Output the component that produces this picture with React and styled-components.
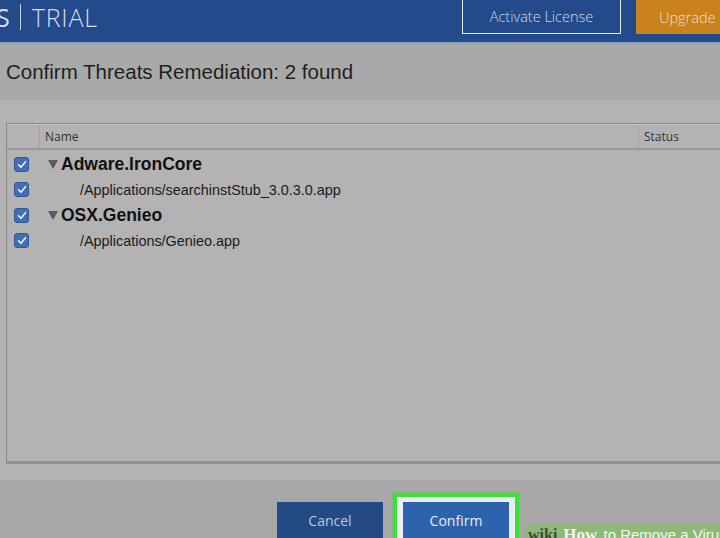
import React from "react";
import styled, { createGlobalStyle } from "styled-components";

const GlobalStyle = createGlobalStyle`
  html, body {
    margin: 0;
    padding: 0;
    background: #b3b3b3;
    font-family: "Liberation Sans", Arial, sans-serif;
    overflow: hidden;
  }
`;

const threats = [
  {
    name: "Adware.IronCore",
    files: ["/Applications/searchinstStub_3.0.3.0.app"],
  },
  {
    name: "OSX.Genieo",
    files: ["/Applications/Genieo.app"],
  },
];

export default function App() {
  return (
    <Page>
      <GlobalStyle />
      <TopBar>
        <Brand>
          <span className="logo">S</span>
          <span className="sep" />
          <span className="trial">TRIAL</span>
        </Brand>
        <TopActions>
          <OutlineButton>Activate License</OutlineButton>
          <UpgradeButton>Upgrade</UpgradeButton>
        </TopActions>
      </TopBar>
      <TitleBand>
        <h1>Confirm Threats Remediation: 2 found</h1>
      </TitleBand>
      <Body>
        <Table>
          <HeadRow>
            <div className="check" />
            <div className="name">Name</div>
            <div className="status">Status</div>
          </HeadRow>
          {threats.map((t) => (
            <React.Fragment key={t.name}>
              <Row $tall>
                <CheckBox />
                <Threat>
                  <Caret />
                  {t.name}
                </Threat>
              </Row>
              {t.files.map((f) => (
                <Row key={f}>
                  <CheckBox />
                  <FilePath>{f}</FilePath>
                </Row>
              ))}
            </React.Fragment>
          ))}
        </Table>
      </Body>
      <Footer>
        <ActionButton $dark>Cancel</ActionButton>
        <Highlight>
          <ActionButton>Confirm</ActionButton>
        </Highlight>
        <Watermark>
          <b>wiki</b>
          <strong>How</strong> to Remove a Virus
        </Watermark>
      </Footer>
    </Page>
  );
}

function CheckBox() {
  return (
    <Box>
      <svg width="10" height="9" viewBox="0 0 10 9">
        <path
          d="M1.5 4.8 L4 7.2 L8.6 1.6"
          fill="none"
          stroke="#fff"
          strokeWidth="1.4"
          strokeLinecap="round"
          strokeLinejoin="round"
        />
      </svg>
    </Box>
  );
}

const Page = styled.div`
  width: 720px;
  height: 538px;
  display: flex;
  flex-direction: column;
  background: #b3b3b3;
`;

const TopBar = styled.header`
  height: 44px;
  background: #234a8a;
  border-bottom: 2px solid #8da3c4;
  display: flex;
  justify-content: space-between;
  align-items: flex-start;
  box-sizing: border-box;
  flex-shrink: 0;
`;

const Brand = styled.div`
  display: flex;
  align-items: center;
  height: 34px;
  color: #d5ddeb;
  font-family: "Open Sans", "Liberation Sans", sans-serif;
  font-weight: 300;
  font-size: 25px;

  .logo {
    margin-left: -4px;
    font-weight: 400;
  }
  .sep {
    width: 1px;
    height: 26px;
    background: #c9d3e4;
    margin: 0 11px 0 10px;
  }
  .trial {
    letter-spacing: 0.8px;
  }
`;

const TopActions = styled.div`
  display: flex;
  gap: 15px;
  margin-right: -20px;
`;

const OutlineButton = styled.div`
  width: 159px;
  height: 34px;
  box-sizing: border-box;
  border: 1px solid #e4e9f2;
  border-top: none;
  color: #d3dbe8;
  display: flex;
  align-items: center;
  justify-content: center;
  font-family: "Open Sans", "Liberation Sans", sans-serif;
  font-weight: 300;
  font-size: 14.5px;
`;

const UpgradeButton = styled.div`
  width: 104px;
  height: 34px;
  background: #c9821c;
  color: #f1dfc4;
  display: flex;
  align-items: center;
  padding-left: 23px;
  box-sizing: border-box;
  font-family: "Open Sans", "Liberation Sans", sans-serif;
  font-weight: 300;
  font-size: 14.5px;
`;

const TitleBand = styled.div`
  height: 56px;
  background: #a9a9a9;
  display: flex;
  align-items: center;
  padding-left: 6px;
  box-sizing: border-box;
  flex-shrink: 0;

  h1 {
    margin: 0;
    font-family: "Liberation Sans", Arial, sans-serif;
    font-weight: 400;
    font-size: 20.5px;
    color: #1f1f1f;
  }
`;

const Body = styled.div`
  flex: 1;
  padding: 23px 0 0 6px;
  display: flex;
  flex-direction: column;
`;

const Table = styled.div`
  height: 341px;
  box-sizing: border-box;
  border: 1px solid #8a8a8a;
  border-right: none;
  border-bottom: 3px solid #939393;
  background: #b3b3b3;
`;

const HeadRow = styled.div`
  height: 23px;
  display: grid;
  grid-template-columns: 32px 1fr 82px;
  border-top: 1px solid #c2c2c2;
  border-bottom: 2px solid #989898;
  font-family: "Open Sans", "Liberation Sans", sans-serif;
  font-size: 12px;
  color: #333;
  margin-bottom: 1px;

  .name,
  .status {
    display: flex;
    align-items: center;
    padding-left: 5px;
    border-left: 1px solid #a3a3a3;
  }
`;

const Row = styled.div`
  height: ${(p) => (p.$tall ? "26px" : "25px")};
  display: flex;
  align-items: center;
`;

const Box = styled.div`
  width: 15px;
  height: 15px;
  margin-left: 7px;
  border-radius: 3px;
  background: #3f6fb5;
  border: 1px solid #2f5894;
  box-sizing: border-box;
  display: flex;
  align-items: center;
  justify-content: center;
  flex-shrink: 0;
`;

const Threat = styled.div`
  display: flex;
  align-items: center;
  margin-left: 19px;
  font-family: "Liberation Sans", Arial, sans-serif;
  font-weight: 700;
  font-size: 17.5px;
  color: #111;
`;

const Caret = styled.span`
  width: 0;
  height: 0;
  border-left: 5px solid transparent;
  border-right: 5px solid transparent;
  border-top: 9px solid #5a5a5a;
  margin-right: 3px;
`;

const FilePath = styled.div`
  margin-left: 51px;
  font-family: "Liberation Sans", Arial, sans-serif;
  font-size: 14.4px;
  color: #1a1a1a;
`;

const Footer = styled.div`
  height: 58px;
  background: #a8a8a8;
  flex-shrink: 0;
  display: flex;
  align-items: flex-start;
  padding: 13px 0 0 277px;
  box-sizing: border-box;
  gap: 10px;
  position: relative;
`;

const ActionButton = styled.div`
  width: 106px;
  height: 40px;
  margin-top: ${(p) => (p.$dark ? "9px" : "0")};
  background: ${(p) => (p.$dark ? "#234a85" : "#2d62ad")};
  color: ${(p) => (p.$dark ? "#b9c6da" : "#e8eef7")};
  display: flex;
  align-items: center;
  justify-content: center;
  padding-bottom: 4px;
  box-sizing: border-box;
  font-family: "Open Sans", "Liberation Sans", sans-serif;
  font-size: 14px;
`;

const Highlight = styled.div`
  width: 126px;
  height: 45px;
  box-sizing: border-box;
  border: 4px solid #3ee03a;
  border-bottom: none;
  padding: 3px 3px 0 3px;
  background: #e9eef0;
  box-shadow: 0 0 2px #3ee03a;
  display: flex;
  justify-content: center;
  align-items: flex-start;

  & > div {
    margin-top: 2px;
    width: 106px;
  }
`;

const Watermark = styled.div`
  position: absolute;
  right: 0;
  bottom: 0;
  width: 192px;
  height: 14px;
  background: #8fb87a;
  border-top-left-radius: 8px;
  font-family: "Liberation Sans", Arial, sans-serif;
  font-size: 15px;
  color: #f3f8ef;
  white-space: nowrap;
  padding-left: 3px;
  line-height: 21px;
  overflow: hidden;

  b {
    font-family: "Liberation Serif", serif;
    color: #3d4a37;
    font-size: 16px;
    margin-right: 6px;
  }
  strong {
    font-family: "Liberation Serif", serif;
    font-size: 17px;
    color: #f3f8ef;
    margin-right: 2px;
  }
`;
